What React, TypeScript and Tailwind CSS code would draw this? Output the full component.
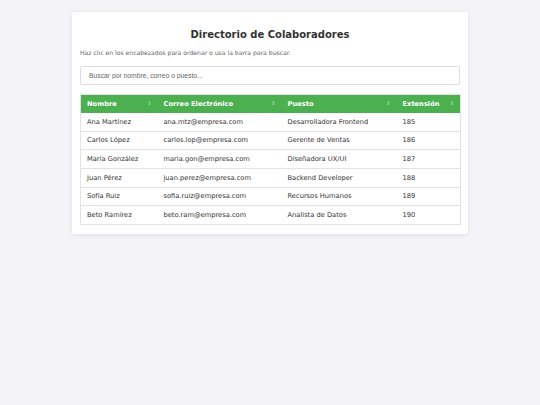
import { useState } from 'react';

interface Colaborador {
  nombre: string;
  correo: string;
  puesto: string;
  extension: number;
}

const colaboradores: Colaborador[] = [
  { nombre: 'Ana Martínez', correo: 'ana.mtz@empresa.com', puesto: 'Desarrolladora Frontend', extension: 185 },
  { nombre: 'Carlos López', correo: 'carlos.lop@empresa.com', puesto: 'Gerente de Ventas', extension: 186 },
  { nombre: 'María González', correo: 'maria.gon@empresa.com', puesto: 'Diseñadora UX/UI', extension: 187 },
  { nombre: 'Juan Pérez', correo: 'juan.perez@empresa.com', puesto: 'Backend Developer', extension: 188 },
  { nombre: 'Sofía Ruiz', correo: 'sofia.ruiz@empresa.com', puesto: 'Recursos Humanos', extension: 189 },
  { nombre: 'Beto Ramírez', correo: 'beto.ram@empresa.com', puesto: 'Analista de Datos', extension: 190 },
];

const columnas = [
  { key: 'nombre', label: 'Nombre', width: 'w-[77px]' },
  { key: 'correo', label: 'Correo Electrónico', width: 'w-[124px]' },
  { key: 'puesto', label: 'Puesto', width: 'w-[115px]' },
  { key: 'extension', label: 'Extensión', width: 'w-[64px]' },
] as const;

export default function App() {
  const [busqueda, setBusqueda] = useState('');

  const filtrados = colaboradores.filter((c) => {
    const q = busqueda.toLowerCase();
    return (
      c.nombre.toLowerCase().includes(q) ||
      c.correo.toLowerCase().includes(q) ||
      c.puesto.toLowerCase().includes(q)
    );
  });

  return (
    <div className="min-h-screen bg-[#f4f4f8] pt-[12px] font-['DejaVu_Sans',sans-serif]">
      <div className="mx-auto w-[396px] rounded-[3px] bg-white px-[8px] pt-[16px] pb-[9px] shadow-[0_1px_5px_rgba(0,0,0,0.09)]">
        {/* Header */}
        <h1 className="text-center text-[10px] leading-[14px] font-bold text-[#333]">
          Directorio de Colaboradores
        </h1>
        <p className="mt-[7px] text-[6.1px] leading-[8px] text-[#666]">
          Haz clic en los encabezados para ordenar o usa la barra para buscar.
        </p>

        {/* Search */}
        <input
          type="text"
          value={busqueda}
          onChange={(e) => setBusqueda(e.target.value)}
          placeholder="Buscar por nombre, correo o puesto..."
          className="mt-[9px] block h-[19px] w-full rounded-[2px] border border-[#ddd] px-[8px] font-['Liberation_Sans',sans-serif] text-[6.75px] text-[#333] outline-none placeholder:text-[#666]"
        />

        {/* Table */}
        <table className="mt-[9px] w-full table-fixed border-collapse border border-[#e2e2e2] text-[6.7px]">
          <thead>
            <tr className="bg-[#4caf50]">
              {columnas.map((col) => (
                <th key={col.key} className={`${col.width} h-[18px] px-[6px] text-left font-bold text-white`}>
                  <div className="flex items-center justify-between">
                    <span>{col.label}</span>
                    <span className="text-[5px] text-white/50">↕</span>
                  </div>
                </th>
              ))}
            </tr>
          </thead>
          <tbody>
            {filtrados.map((c) => (
              <tr key={c.correo} className="border-b border-[#e2e2e2]">
                <td className="h-[18.67px] px-[6px] text-[#333]">{c.nombre}</td>
                <td className="h-[18.67px] px-[6px] text-[#333]">{c.correo}</td>
                <td className="h-[18.67px] px-[6px] text-[#333]">{c.puesto}</td>
                <td className="h-[18.67px] px-[6px] text-[#333]">{c.extension}</td>
              </tr>
            ))}
          </tbody>
        </table>
      </div>
    </div>
  );
}
